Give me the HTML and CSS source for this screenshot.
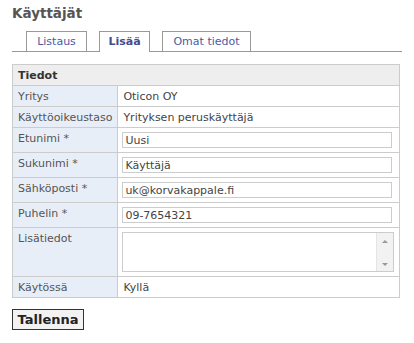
FILE: index.html
```html
<!DOCTYPE html>
<html lang="fi">
<head>
    <meta charset="UTF-8">
    <title>Käyttäjät</title>
    <link rel="stylesheet" href="styles.css">
</head>
<body>
    <h1>Käyttäjät</h1>

    <ul class="tabs">
        <li class="tab-list"><a href="#">Listaus</a></li>
        <li class="tab-add active"><a href="#">Lisää</a></li>
        <li class="tab-own"><a href="#">Omat tiedot</a></li>
    </ul>

    <form class="user-form">
        <table class="details">
            <tr>
                <th colspan="2">Tiedot</th>
            </tr>
            <tr>
                <td class="label">Yritys</td>
                <td>Oticon OY</td>
            </tr>
            <tr>
                <td class="label">Käyttöoikeustaso</td>
                <td>Yrityksen peruskäyttäjä</td>
            </tr>
            <tr>
                <td class="label">Etunimi *</td>
                <td><input type="text" value="Uusi"></td>
            </tr>
            <tr>
                <td class="label">Sukunimi *</td>
                <td><input type="text" value="Käyttäjä"></td>
            </tr>
            <tr>
                <td class="label">Sähköposti *</td>
                <td><input type="text" value="uk@korvakappale.fi"></td>
            </tr>
            <tr>
                <td class="label">Puhelin *</td>
                <td><input type="text" value="09-7654321"></td>
            </tr>
            <tr>
                <td class="label">Lisätiedot</td>
                <td>
                    <div class="textbox">
                        <textarea></textarea>
                        <div class="scrollbar">
                            <span class="arrow up"></span>
                            <span class="arrow down"></span>
                        </div>
                    </div>
                </td>
            </tr>
            <tr>
                <td class="label">Käytössä</td>
                <td>Kyllä</td>
            </tr>
        </table>

        <button type="button" class="save">Tallenna</button>
    </form>
</body>
</html>
```

FILE: styles.css
```css
body {
    margin: 0;
    padding: 4px 12px;
    font-family: "DejaVu Sans", Verdana, sans-serif;
    font-size: 11px;
    color: #555;
    background: #fff;
}
h1 {
    margin: 0;
    font-size: 13.5px;
    line-height: 18px;
    color: #555;
}
.tabs {
    list-style: none;
    margin: 9px 0 0;
    padding: 0 0 0 14px;
    display: flex;
    gap: 12px;
    border-bottom: 1px solid #999;
    height: 20px;
}
.tabs li {
    border: 1px solid #999;
    border-bottom: none;
    background: #fff;
    height: 20px;
    box-sizing: border-box;
    text-align: center;
}
.tabs .tab-list {
    width: 61px;
}
.tabs .tab-add {
    width: 51px;
}
.tabs .tab-own {
    width: 89px;
}
.tabs a {
    display: block;
    line-height: 19px;
    color: #4b5aa6;
    text-decoration: none;
}
.tabs li.active {
    height: 21px;
}
.tabs li.active a {
    font-weight: bold;
    color: #3f4d93;
}
.user-form {
    margin-top: 12px;
}
.details {
    border-collapse: collapse;
    width: 386px;
}
.details th,
.details td {
    border: 1px solid #ccc;
    padding: 4px 5px 3px;
    line-height: 13px;
    text-align: left;
    vertical-align: top;
}
.details th {
    background: #eee;
    color: #333;
}
.details td {
    color: #444;
}
.details td.label {
    width: 94px;
    background: #e8eef7;
    color: #555;
    white-space: nowrap;
}
.details input {
    display: block;
    box-sizing: border-box;
    width: 270px;
    height: 16px;
    margin: 0 0 1px -1px;
    padding: 0 2px;
    border: 1px solid #ccc;
    font: inherit;
    line-height: 14px;
    color: #444;
}
.textbox {
    display: flex;
    box-sizing: border-box;
    width: 272px;
    height: 40px;
    margin: 0 0 1px -1px;
    border: 1px solid #ccc;
}
.textbox textarea {
    flex: 1;
    border: none;
    resize: none;
    outline: none;
    font: inherit;
    padding: 1px 2px;
}
.scrollbar {
    width: 16px;
    background: #f2f2f2;
    border-left: 1px solid #e4e4e4;
    display: flex;
    flex-direction: column;
    justify-content: space-between;
    align-items: center;
    padding: 7px 0 5px;
}
.arrow {
    width: 0;
    height: 0;
    border-left: 3px solid transparent;
    border-right: 3px solid transparent;
}
.arrow.up {
    border-bottom: 3px solid #999;
}
.arrow.down {
    border-top: 3px solid #999;
}
.save {
    margin-top: 11px;
    width: 72px;
    height: 21px;
    padding: 0;
    border: 1px solid #333;
    background: #f2f2f2;
    font-family: "DejaVu Sans", Verdana, sans-serif;
    font-size: 13px;
    font-weight: bold;
    color: #222;
}
```
